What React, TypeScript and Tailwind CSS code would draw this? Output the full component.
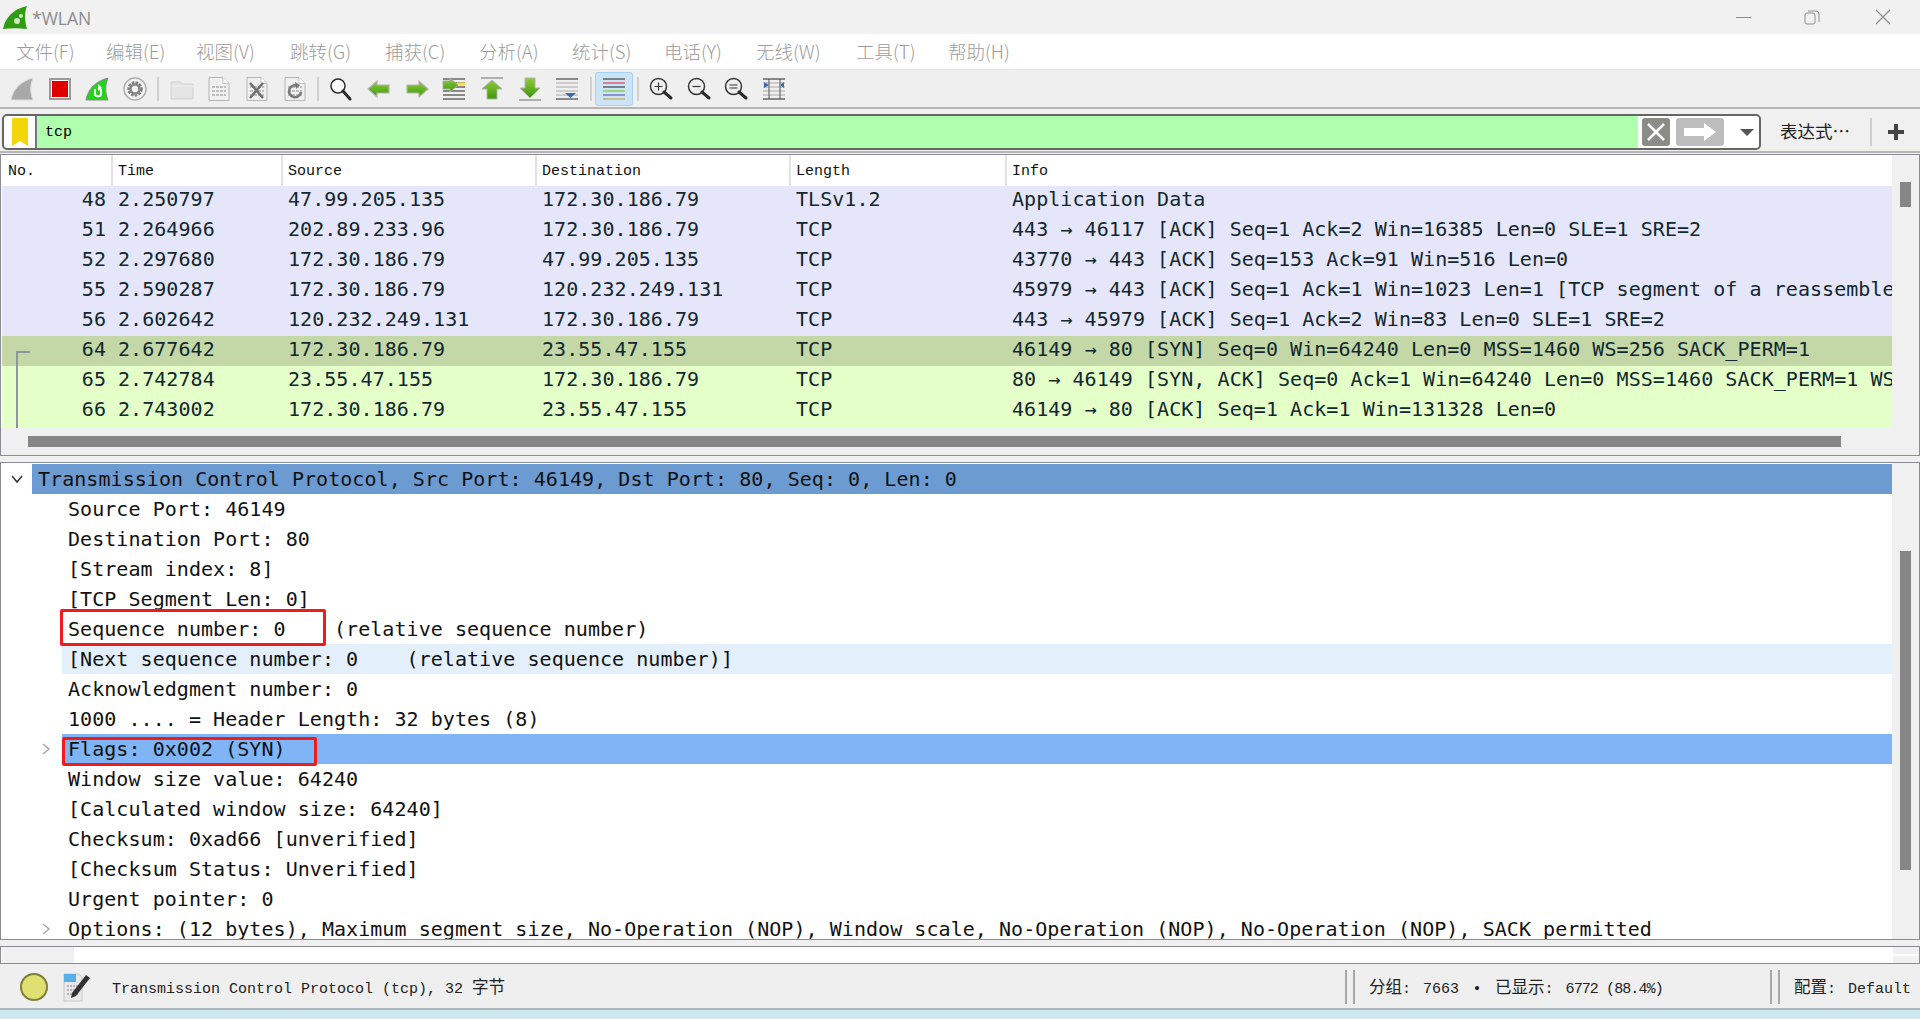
import type { ReactNode } from 'react';

const MENUS = [
  { label: '文件(F)', width: 'w-[90px]' },
  { label: '编辑(E)', width: 'w-[90px]' },
  { label: '视图(V)', width: 'w-[94px]' },
  { label: '跳转(G)', width: 'w-[95px]' },
  { label: '捕获(C)', width: 'w-[94px]' },
  { label: '分析(A)', width: 'w-[93px]' },
  { label: '统计(S)', width: 'w-[92px]' },
  { label: '电话(Y)', width: 'w-[92px]' },
  { label: '无线(W)', width: 'w-[100px]' },
  { label: '工具(T)', width: 'w-[92px]' },
  { label: '帮助(H)', width: 'w-[90px]' },
];

const PACKETS = [
  { no: 48, time: '2.250797', src: '47.99.205.135', dst: '172.30.186.79', proto: 'TLSv1.2', info: 'Application Data', tone: 'bg-[#e6e6fa]' },
  { no: 51, time: '2.264966', src: '202.89.233.96', dst: '172.30.186.79', proto: 'TCP', info: '443 → 46117 [ACK] Seq=1 Ack=2 Win=16385 Len=0 SLE=1 SRE=2', tone: 'bg-[#e6e6fa]' },
  { no: 52, time: '2.297680', src: '172.30.186.79', dst: '47.99.205.135', proto: 'TCP', info: '43770 → 443 [ACK] Seq=153 Ack=91 Win=516 Len=0', tone: 'bg-[#e6e6fa]' },
  { no: 55, time: '2.590287', src: '172.30.186.79', dst: '120.232.249.131', proto: 'TCP', info: '45979 → 443 [ACK] Seq=1 Ack=1 Win=1023 Len=1 [TCP segment of a reassembled PDU]', tone: 'bg-[#e6e6fa]' },
  { no: 56, time: '2.602642', src: '120.232.249.131', dst: '172.30.186.79', proto: 'TCP', info: '443 → 45979 [ACK] Seq=1 Ack=2 Win=83 Len=0 SLE=1 SRE=2', tone: 'bg-[#e6e6fa]' },
  { no: 64, time: '2.677642', src: '172.30.186.79', dst: '23.55.47.155', proto: 'TCP', info: '46149 → 80 [SYN] Seq=0 Win=64240 Len=0 MSS=1460 WS=256 SACK_PERM=1', tone: 'bg-[#c3d8a6]' },
  { no: 65, time: '2.742784', src: '23.55.47.155', dst: '172.30.186.79', proto: 'TCP', info: '80 → 46149 [SYN, ACK] Seq=0 Ack=1 Win=64240 Len=0 MSS=1460 SACK_PERM=1 WS=256', tone: 'bg-[#e4ffc7]' },
  { no: 66, time: '2.743002', src: '172.30.186.79', dst: '23.55.47.155', proto: 'TCP', info: '46149 → 80 [ACK] Seq=1 Ack=1 Win=131328 Len=0', tone: 'bg-[#e4ffc7]' },
];

const DETAILS = [
  'Source Port: 46149',
  'Destination Port: 80',
  '[Stream index: 8]',
  '[TCP Segment Len: 0]',
  'Sequence number: 0    (relative sequence number)',
  '[Next sequence number: 0    (relative sequence number)]',
  'Acknowledgment number: 0',
  '1000 .... = Header Length: 32 bytes (8)',
  'Flags: 0x002 (SYN)',
  'Window size value: 64240',
  '[Calculated window size: 64240]',
  'Checksum: 0xad66 [unverified]',
  '[Checksum Status: Unverified]',
  'Urgent pointer: 0',
  'Options: (12 bytes), Maximum segment size, No-Operation (NOP), Window scale, No-Operation (NOP), No-Operation (NOP), SACK permitted',
];

function Ico({ children, size = 26 }: { children: ReactNode; size?: number }) {
  return (
    <svg width={size} height={size} viewBox="0 0 26 26" fill="none">
      {children}
    </svg>
  );
}

function Tool({ children, active }: { children: ReactNode; active?: boolean }) {
  return (
    <div
      className={`w-[37.7px] h-[34px] flex items-center justify-center shrink-0 rounded-[3px] ${
        active ? 'bg-[#cce4f7] border border-[#a6d2f6]' : ''
      }`}
    >
      {children}
    </div>
  );
}

function Sep() {
  return <div className="w-[2px] h-[24px] bg-[#cfcfcf] mx-[3.5px] shrink-0" />;
}

function Page({ children }: { children?: ReactNode }) {
  return (
    <Ico>
      <path d="M3 1.500h14l6 6v17H3z" fill="#f0f0f0" stroke="#b5b5b5" />
      <path d="M17 1.500v6h6" fill="#fff" stroke="#c5c5c5" />
      <path d="M6 11h14M6 15h14M6 19h14" stroke="#bdbdbd" strokeWidth="2" strokeDasharray="3 1" />
      {children}
    </Ico>
  );
}

function Lines({ colors }: { colors: string[] }) {
  return (
    <>
      {colors.map((c, i) => (
        <path key={i} d={`M2 ${3 + i * 4}h22`} stroke={c} strokeWidth="1" />
      ))}
    </>
  );
}

function Toolbar() {
  const green = 'url(#arrowGreen)';
  return (
    <div className="h-[39px] pt-px bg-[#efefef] border-b-2 border-[#b6b6b6] flex items-center pl-[3px] shrink-0">
      <svg width="0" height="0" className="absolute">
        <defs>
          <linearGradient id="arrowGreen" x1="0" y1="0" x2="0" y2="1">
            <stop offset="0" stopColor="#8fca3a" />
            <stop offset="1" stopColor="#3d9a0c" />
          </linearGradient>
        </defs>
      </svg>
      <Tool>
        <Ico>
          <path d="M2 24C4 13 12 5 24 2c-3 7-3 15 0 22z" fill="#a9a9a9" stroke="#dcdcdc" />
        </Ico>
      </Tool>
      <Tool>
        <div className="w-[22px] h-[22px] border-2 border-[#9a9a9a] bg-white p-[1px]">
          <div className="w-full h-full bg-[#e00000]" />
        </div>
      </Tool>
      <Tool>
        <Ico>
          <path d="M2 24C4 13 12 5 24 2c-3 7-3 15 0 22z" fill="#22d41a" stroke="#8a8a8a" />
          <path d="M11 13v5c0 3 6 3 6 0v-5" stroke="#fff" strokeWidth="2" />
          <path d="M14 8l4 4-4 3z" fill="#fff" />
        </Ico>
      </Tool>
      <Tool>
        <Ico>
          <circle cx="13" cy="13" r="11" fill="#f4f4f4" stroke="#b0b0b0" strokeWidth="1.500" />
          <circle cx="13" cy="13" r="6.500" stroke="#7d7d7d" strokeWidth="2.500" strokeDasharray="2.600 1.200" />
          <circle cx="13" cy="13" r="4.500" stroke="#858585" strokeWidth="2.500" />
        </Ico>
      </Tool>
      <Sep />
      <Tool>
        <Ico>
          <path d="M2 6h9l2 2h11v15H2z" fill="#e4e4e4" stroke="#d2d2d2" />
          <path d="M2 10h22" stroke="#f2f2f2" />
        </Ico>
      </Tool>
      <Tool>
        <Page />
      </Tool>
      <Tool>
        <Page>
          <path d="M6 7l13 15M19 7L6 22" stroke="#6f6f6f" strokeWidth="2.500" />
        </Page>
      </Tool>
      <Tool>
        <Page>
          <path d="M19 16a6 6 0 1 1-3-6" stroke="#7a7a7a" strokeWidth="2.500" />
          <path d="M13 6l5 3-4 4z" fill="#7a7a7a" />
        </Page>
      </Tool>
      <Sep />
      <Tool>
        <Ico>
          <circle cx="10" cy="10" r="7" fill="#fff" stroke="#2a2a2a" strokeWidth="1.500" />
          <path d="M15 15l7 8" stroke="#2a2a2a" strokeWidth="3" strokeLinecap="round" />
        </Ico>
      </Tool>
      <Tool>
        <Ico>
          <path d="M2 13l9-8v4h12v8H11v4z" fill={green} stroke="#b3b3b3" strokeWidth="1.200" />
        </Ico>
      </Tool>
      <Tool>
        <Ico>
          <path d="M24 13l-9-8v4H3v8h12v4z" fill={green} stroke="#b3b3b3" strokeWidth="1.200" />
        </Ico>
      </Tool>
      <Tool>
        <Ico>
          <Lines colors={['#222', '#222', '#222', '#222', '#222', '#222']} />
          <path d="M16 8h8" stroke="#f5dd55" strokeWidth="3" />
          <path d="M17 9l-8-7v3H2v8h7v3z" fill={green} stroke="#a8a8a8" />
        </Ico>
      </Tool>
      <Tool>
        <Ico>
          <path d="M2 2h22" stroke="#9a9a9a" strokeWidth="1.500" />
          <path d="M13 4l10 9h-5v10H8V13H3z" fill={green} stroke="#b3b3b3" />
        </Ico>
      </Tool>
      <Tool>
        <Ico>
          <path d="M2 24h22" stroke="#9a9a9a" strokeWidth="1.500" />
          <path d="M13 22L3 12h5V2h10v10h5z" fill={green} stroke="#b3b3b3" />
        </Ico>
      </Tool>
      <Tool>
        <Ico>
          <Lines colors={['#222', '#aaa', '#aaa', '#aaa', '#aaa', '#222']} />
          <path d="M11 17h11l-5.500 5z" fill="#3c6cb0" />
        </Ico>
      </Tool>
      <Sep />
      <Tool active>
        <Ico>
          <Lines colors={['#222', '#e81c1c', '#222', '#68c800', '#4848b0', '#c89820']} />
        </Ico>
      </Tool>
      <Sep />
      <Tool>
        <Ico>
          <circle cx="10.500" cy="10.500" r="8" stroke="#333" strokeWidth="1.500" />
          <path d="M6.500 10.500h8M10.500 6.500v8" stroke="#333" strokeWidth="1.200" />
          <path d="M16 16l7 6" stroke="#2a2a2a" strokeWidth="3" strokeLinecap="round" />
        </Ico>
      </Tool>
      <Tool>
        <Ico>
          <circle cx="10.500" cy="10.500" r="8" stroke="#333" strokeWidth="1.500" />
          <path d="M6.500 10.500h8" stroke="#333" strokeWidth="1.200" />
          <path d="M16 16l7 6" stroke="#2a2a2a" strokeWidth="3" strokeLinecap="round" />
        </Ico>
      </Tool>
      <Tool>
        <Ico>
          <circle cx="10.500" cy="10.500" r="8" stroke="#333" strokeWidth="1.500" />
          <path d="M6.500 9h8M6.500 12h8" stroke="#333" strokeWidth="1.200" />
          <path d="M16 16l7 6" stroke="#2a2a2a" strokeWidth="3" strokeLinecap="round" />
        </Ico>
      </Tool>
      <Tool>
        <Ico>
          <Lines colors={['#222', '#aaa', '#aaa', '#aaa', '#aaa', '#222']} />
          <path d="M8 3v20M19 3v20" stroke="#555" strokeWidth="1" />
          <path d="M3 6l5 3-5 3zM23 6l-4 3 4 3z" fill="#3c6cb0" />
        </Ico>
      </Tool>
    </div>
  );
}

function FilterBar() {
  return (
    <div className="h-[44px] pt-[4px] bg-[#f0f0f0] border-b-2 border-[#b6b6b6] flex items-center pl-[2px] shrink-0">
      <div className="w-[1759px] h-[36px] border-2 border-[#666] rounded-[5px] bg-white flex items-stretch overflow-hidden">
        <div className="w-[33px] flex items-center justify-center border-r-2 border-[#777]">
          <svg width="16" height="28" viewBox="0 0 16 28">
            <path d="M0 1q0-1 1-1h14q1 0 1 1v27l-8-5-8 5z" fill="#f2d60a" />
          </svg>
        </div>
        <div className="w-[1601px] bg-[#afffaf] pl-[8px] pt-[3px] flex items-center text-[15px] text-black font-['Liberation_Mono',monospace]">
          tcp
        </div>
        <div className="flex-1 flex items-center pl-[4px]">
          <div className="w-[28px] h-[28px] rounded-[3px] bg-[#8b8c86] flex items-center justify-center">
            <svg width="20" height="20" viewBox="0 0 20 20">
              <path d="M2 2l16 16M18 2L2 18" stroke="#fff" strokeWidth="2.500" />
            </svg>
          </div>
          <div className="w-[48px] h-[28px] rounded-[3px] bg-[#bdbdbd] ml-[6px] flex items-center justify-center">
            <svg width="34" height="18" viewBox="0 0 34 18">
              <path d="M1 5h20V0l12 9-12 9v-5H1z" fill="#fff" />
            </svg>
          </div>
          <div className="ml-[16px] w-0 h-0 border-x-[7px] border-x-transparent border-t-[7px] border-t-[#555]" />
        </div>
      </div>
      <div className="ml-[19px] mb-[2px] w-[72px] text-[17.500px] text-[#222] font-['Noto_Sans_CJK_SC',sans-serif] whitespace-nowrap">
        表达式…
      </div>
      <div className="ml-[18px] w-[2px] h-[28px] bg-[#cfcfcf]" />
      <svg width="16" height="16" viewBox="0 0 16 16" className="ml-[16px]">
        <path d="M0 8h16M8 0v16" stroke="#444" strokeWidth="4" />
      </svg>
    </div>
  );
}

function PacketList() {
  const cols = 'grid grid-cols-[109px_170px_254px_254px_216px_887px]';
  return (
    <div className="mt-px h-[302px] border border-[#8b8b96] bg-[#f0f0f0] flex flex-col shrink-0">
      <div className="flex h-[273px] shrink-0">
        <div className="relative w-[1891px] pl-px shrink-0 bg-white overflow-hidden">
          <div className={`${cols} h-[31px] items-center text-[15px] text-[#111] font-['Liberation_Mono',monospace]`}>
            {['No.', 'Time', 'Source', 'Destination', 'Length', 'Info'].map((h, i) => (
              <div key={h} className={`h-full flex items-center pt-[4px] ${i === 0 ? 'pl-[6px]' : 'pl-[5px] border-l-2 border-[#e2e2e2]'}`}>
                {h}
              </div>
            ))}
          </div>
          {PACKETS.map(p => (
            <div
              key={p.no}
              className={`${cols} ${p.no === 66 ? 'h-[32px]' : 'h-[30px]'} items-start leading-[26px] ${p.tone} text-[20px] tracking-[0.05px] text-[#12272e] font-['DejaVu_Sans_Mono',monospace] whitespace-pre`}
            >
              <div className="text-right pr-[5px]">{p.no}</div>
              <div className="pl-[7px]">{p.time}</div>
              <div className="pl-[7px]">{p.src}</div>
              <div className="pl-[7px]">{p.dst}</div>
              <div className="pl-[7px]">{p.proto}</div>
              <div className="pl-[7px] overflow-hidden">{p.info}</div>
            </div>
          ))}
          <div className="absolute left-[15px] top-[196px] h-[77px] w-[14px] border-l-2 border-t-2 border-[#8f959c]" />
        </div>
        <div className="flex-1 pl-[8px] pt-[27px]">
          <div className="w-[11px] h-[25px] bg-[#868686]" />
        </div>
      </div>
      <div className="pl-[27px] pt-[8px]">
        <div className="w-[1813px] h-[11px] bg-[#868686]" />
      </div>
    </div>
  );
}

function Chevron({ down, dark }: { down?: boolean; dark?: boolean }) {
  return (
    <svg width="14" height="14" viewBox="0 0 14 14" fill="none">
      <path d={down ? 'M2 4l5 6 5-6' : 'M4 2l6 5-6 5'} stroke={dark ? '#333' : '#a8a8a8'} strokeWidth="1.500" />
    </svg>
  );
}

function DetailRow({ text }: { text: string }) {
  const expandable = text.startsWith('Flags') || text.startsWith('Options');
  const tone = text.startsWith('Flags') ? 'bg-[#7fb4f6]' : text.startsWith('[Next') ? 'bg-[#e3f0fc]' : '';
  return (
    <div className="flex h-[30px] items-center shrink-0">
      <div className="w-[61px] pl-[38px] shrink-0 flex items-center">{expandable && <Chevron />}</div>
      <div className={`flex-1 h-full flex items-center pl-[6px] whitespace-pre overflow-hidden ${tone}`}>{text}</div>
    </div>
  );
}

function PacketDetails() {
  return (
    <div className="mt-[6px] h-[478px] border border-[#8b8b96] bg-white flex shrink-0 overflow-hidden">
      <div className="relative w-[1891px] pt-px shrink-0 overflow-hidden text-[20px] tracking-[0.05px] text-[#111] font-['DejaVu_Sans_Mono',monospace]">
        <div className="flex h-[30px] items-center">
          <div className="w-[31px] pl-[9px] shrink-0 flex items-center">
            <Chevron down dark />
          </div>
          <div className="flex-1 h-full flex items-center pl-[6px] bg-[#6c9bd2] whitespace-pre">
            Transmission Control Protocol, Src Port: 46149, Dst Port: 80, Seq: 0, Len: 0
          </div>
        </div>
        {DETAILS.map(d => (
          <DetailRow key={d} text={d} />
        ))}
        <div className="absolute left-[59px] top-[146px] w-[266px] h-[37px] border-[3px] border-[#f01c1c] rounded-[2px]" />
        <div className="absolute left-[61px] top-[274px] w-[255px] h-[29px] border-[3px] border-[#f01c1c] rounded-[2px]" />
      </div>
      <div className="flex-1 bg-[#f0f0f0] pl-[8px] pt-[88px]">
        <div className="w-[11px] h-[319px] bg-[#868686]" />
      </div>
    </div>
  );
}

function BytesPane() {
  return (
    <div className="mt-[6px] h-[18px] border border-[#8b8b96] bg-white flex shrink-0">
      <div className="w-[72px] ml-px bg-[#f0f0f0]" />
      <div className="flex-1" />
      <div className="w-[26px] flex flex-col justify-center gap-[2px] bg-[#f0f0f0]">
        <div className="h-[2px] bg-white" />
      </div>
    </div>
  );
}

function Cjk({ children }: { children: ReactNode }) {
  return <span className="text-[16.500px] font-['Noto_Sans_CJK_SC',sans-serif]">{children}</span>;
}

function StatusBar() {
  return (
    <div className="h-[44px] pt-[2px] bg-[#efefef] flex items-center shrink-0 text-[15px] text-[#222] font-['Liberation_Mono',monospace]">
      <div className="ml-[20px] w-[28px] h-[28px] rounded-full bg-[#dfdf72] border-2 border-[#7d7d3c] shrink-0" />
      <svg width="28" height="30" viewBox="0 0 28 30" className="ml-[15px] shrink-0">
        <path d="M1 2h15l3 3v24H1z" fill="#e9e9e9" stroke="#c8c8c8" />
        <path d="M1 2h12v8H1z" fill="#5ab0e6" />
        <path d="M4 14h12M4 18h12M4 22h12" stroke="#b5b5b5" strokeWidth="2" strokeDasharray="2 1" />
        <path d="M9 21L23 3l4 3-14 18-5 2z" fill="#333" />
      </svg>
      <div className="ml-[21px] whitespace-pre pt-[2px]">
        Transmission Control Protocol (tcp), 32 <Cjk>字节</Cjk>
      </div>
      <div className="ml-auto flex items-center w-[575px] shrink-0">
        <div className="w-[10px] h-[34px] border-x-2 border-[#a8a8a8] shrink-0" />
        <div className="ml-[14px] whitespace-pre pt-[2px]">
          <Cjk>分组</Cjk>: <span className="ml-[3px]">7663</span>
          <span className="inline-block w-[36px] text-center">•</span>
          <Cjk>已显示</Cjk>: <span className="ml-[3px] tracking-[-0.9px]">6772 (88.4%)</span>
        </div>
        <div className="ml-auto w-[10px] h-[34px] border-x-2 border-[#a8a8a8] shrink-0" />
        <div className="ml-[14px] mr-[8px] w-[118px] whitespace-pre pt-[2px]">
          <Cjk>配置</Cjk>: <span className="ml-[3px]">Default</span>
        </div>
      </div>
    </div>
  );
}

export default function App() {
  return (
    <div className="h-[1019px] w-[1920px] overflow-hidden bg-[#f0f0f0] flex flex-col">
      <div className="h-[34px] bg-[#f1f1f1] flex items-center shrink-0">
        <svg width="26" height="26" viewBox="0 0 26 26" className="ml-[2px] shrink-0">
          <path d="M1 25C3 14 11 5 25 2c-3 7-2 16 0 23-8-1-16-1-24 0z" fill="#2f9c12" />
          <circle cx="15" cy="17" r="3" fill="#cfe8c6" />
          <circle cx="19" cy="12" r="2" fill="#cfe8c6" />
        </svg>
        <span className="ml-[4px] pt-[2px] text-[17.500px] text-[#8d8d8d] font-['Open_Sans',sans-serif]">*WLAN</span>
        <div className="ml-auto flex items-center">
          <div className="w-[15px] h-px bg-[#8f8f8f] mr-[53px]" />
          <svg width="16" height="16" viewBox="0 0 16 16" fill="none" className="mr-[55px]">
            <rect x="1" y="4" width="10" height="11" rx="2" stroke="#8f8f8f" />
            <path d="M4 2h8a3 3 0 0 1 3 3v8" stroke="#8f8f8f" />
          </svg>
          <svg width="16" height="16" viewBox="0 0 16 16" className="mr-[29px]">
            <path d="M1 1l14 14M15 1L1 15" stroke="#8f8f8f" strokeWidth="1.200" />
          </svg>
        </div>
      </div>
      <div className="h-[36px] bg-white border-b border-[#e8e8e8] flex items-center pl-[16px] shrink-0 text-[18.500px] font-light text-[#9c9c9c] font-['Noto_Sans_CJK_SC',sans-serif] whitespace-nowrap">
        {MENUS.map(m => (
          <span key={m.label} className={`${m.width} shrink-0`}>
            {m.label}
          </span>
        ))}
      </div>
      <Toolbar />
      <FilterBar />
      <PacketList />
      <PacketDetails />
      <BytesPane />
      <StatusBar />
      <div className="flex-1 bg-[#cfe7ee] border-t-2 border-[#aab8bc]" />
    </div>
  );
}
